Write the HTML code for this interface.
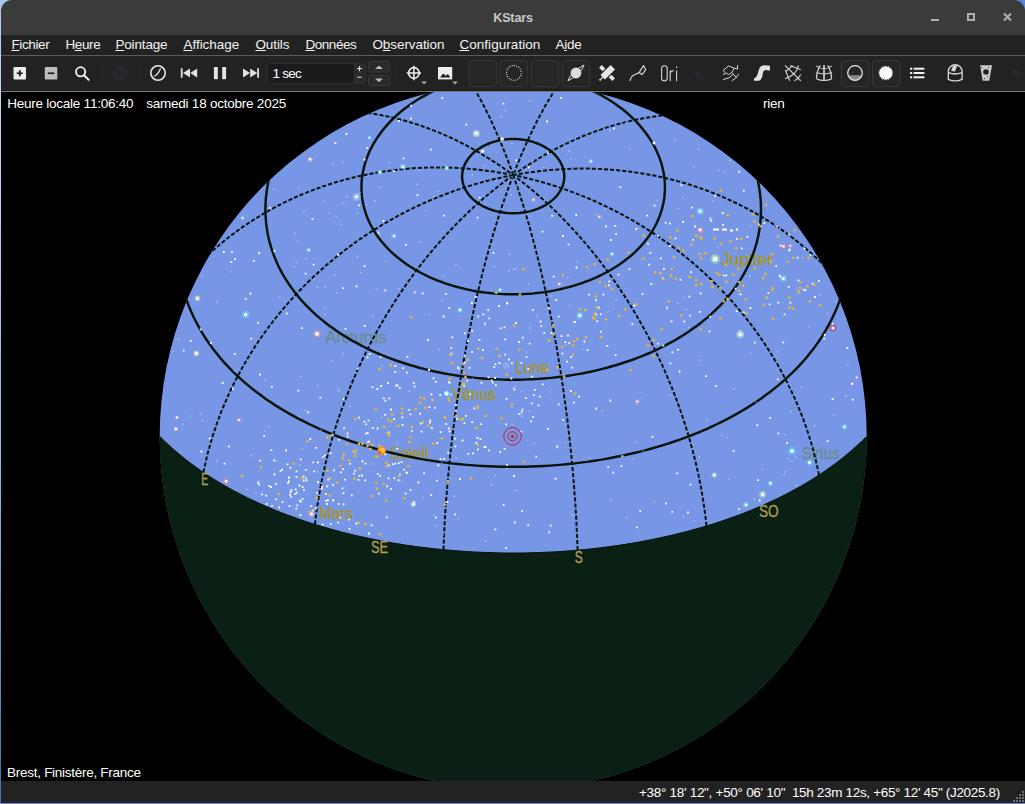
<!DOCTYPE html>
<html><head><meta charset="utf-8"><title>KStars</title><style>
html,body{margin:0;padding:0;}
body{width:1025px;height:804px;overflow:hidden;background:#000;position:relative;font-family:"Liberation Sans",sans-serif;font-size:13px;color:#fff;}
.abs{position:absolute;}
#deskL{left:0;top:0;width:1px;height:804px;background:linear-gradient(#a9c9ee,#bcd8f4 12%,#8fb0e6 60%,#4a6ab4);}
#deskTL{left:0;top:0;width:14px;height:14px;background:#a9c9ee;}
#deskTR{left:1011px;top:0;width:14px;height:14px;background:#5b84d9;}
#title{left:1px;top:0;width:1024px;height:35px;background:#3b3b3b;border-radius:11px 11px 0 0;}
#title .t{left:0;width:1024px;top:10px;text-align:center;font-weight:bold;font-size:12.6px;color:#c8c8c8;line-height:16px;}
#menu{left:1px;top:35px;width:1024px;height:20px;background:#222;}
#menu span{position:absolute;top:1.6px;line-height:16px;font-size:13.5px;color:#f2f2f2;white-space:nowrap;transform-origin:0 50%;}
#menu u{text-decoration:underline;text-underline-offset:1px;}
#sep1{left:1px;top:55px;width:1024px;height:1px;background:#5a5a5a;}
#tool{left:1px;top:56px;width:1024px;height:35px;background:#222;}
#tool .edge{left:0;top:34px;width:1024px;height:1px;background:#1a1a1a;}
#sep2{left:1px;top:91px;width:1024px;height:1px;background:#777;}
#map{left:1px;top:92px;width:1024px;height:689px;background:#000;overflow:hidden;}
#status{left:1px;top:781px;width:1024px;height:22px;background:#222;}
#deskB{left:0;top:803px;width:1025px;height:1px;background:#6a8ad8;}
.info{position:absolute;font-size:13px;color:#fff;white-space:nowrap;line-height:16px;transform-origin:0 50%;}
</style></head><body>
<div class="abs" id="deskTL"></div><div class="abs" id="deskTR"></div>
<div class="abs" id="title"><div class="abs t" style="letter-spacing:-0.18px">KStars</div><svg class="abs" style="left:0;top:0" width="1024" height="35"><rect x="930" y="19" width="8" height="2" fill="#b0b0b0"/><rect x="967" y="14" width="6" height="6" fill="none" stroke="#b0b0b0" stroke-width="2"/><path d="M1003 13.5l7 7M1010 13.5l-7 7" stroke="#b0b0b0" stroke-width="2" fill="none"/></svg></div>
<div class="abs" id="menu"><span id="m0" style="letter-spacing:-0.36px;left:10.4px"><u>F</u>ichier</span><span id="m1" style="letter-spacing:-0.36px;left:64.4px">H<u>e</u>ure</span><span id="m2" style="letter-spacing:-0.16px;left:114.4px"><u>P</u>ointage</span><span id="m3" style="letter-spacing:-0.01px;left:182.4px"><u>A</u>ffichage</span><span id="m4" style="letter-spacing:-0.09px;left:254.4px"><u>O</u>utils</span><span id="m5" style="letter-spacing:-0.44px;left:304.4px"><u>D</u>onnées</span><span id="m6" style="letter-spacing:-0.07px;left:371.4px">O<u>b</u>servation</span><span id="m7" style="letter-spacing:0.05px;left:458.4px"><u>C</u>onfiguration</span><span id="m8" style="letter-spacing:-0.26px;left:554.4px">A<u>i</u>de</span></div>
<div class="abs" id="sep1"></div>
<div class="abs" id="tool"><div class="abs edge"></div><svg class="abs" style="left:0;top:0" width="1024" height="35" viewBox="1 56 1024 35">
<rect x="13.5" y="67" width="12.5" height="12.5" rx="1" fill="#ececec"/>
<path d="M19.75 70.2v6.1M16.7 73.25h6.1" stroke="#111" stroke-width="1.7" fill="none"/>
<rect x="44.8" y="67" width="12.5" height="12.5" rx="1" fill="#bdbdbd"/>
<path d="M47.8 73.25h6.5" stroke="#222" stroke-width="1.8" fill="none"/>
<circle cx="80.6" cy="71.8" r="4.6" fill="none" stroke="#f0f0f0" stroke-width="1.8"/>
<path d="M84 75.2l4.6 4.6" stroke="#f0f0f0" stroke-width="2" stroke-linecap="round"/>
<rect x="101.0" y="65" width="1" height="17" fill="#2a2a2a"/>
<rect x="139.0" y="65" width="1" height="17" fill="#2a2a2a"/>
<rect x="396.0" y="65" width="1" height="17" fill="#2a2a2a"/>
<circle cx="120" cy="73" r="7.8" fill="#25292e"/>
<path d="M116 69q3 1 3 3t3 2q2 1 1 4" stroke="#202327" stroke-width="2" fill="none"/>
<circle cx="158" cy="73" r="7.2" fill="none" stroke="#e8e8e8" stroke-width="1.6"/>
<path d="M154.6 76q3.5-1.5 5.8-7.2" stroke="#e8e8e8" stroke-width="1.3" fill="none" stroke-linecap="round"/>
<path d="M180.8 68.3h1.8v9.4h-1.8zM190 68.6v8.8l-7-4.4zM197.2 68.6v8.8l-7-4.4z" fill="#e0e0e0"/>
<rect x="213.9" y="67" width="3.9" height="12.2" fill="#e4e4e4"/><rect x="222.2" y="67" width="3.9" height="12.2" fill="#e4e4e4"/>
<path d="M257.2 68.3h1.8v9.4h-1.8zM243 68.6v8.8l7-4.4zM250.2 68.6v8.8l7-4.4z" fill="#e0e0e0"/>
<rect x="267.5" y="63.5" width="98.5" height="20" rx="3" fill="#1b1b1b" stroke="#2f2f2f" stroke-width="1"/>
<path d="M353.5 64h9.5a3 3 0 0 1 3 3v13a3 3 0 0 1 -3 3h-9.5z" fill="#2b2b2b"/>
<path d="M357 68.6h5M359.5 66.1v5M357.3 77.2h4.4" stroke="#e0e0e0" stroke-width="1" fill="none"/>
<rect x="368.5" y="61.5" width="21" height="10.5" rx="2.5" fill="#292929" stroke="#3a3a3a"/>
<rect x="368.5" y="75.5" width="21" height="10" rx="2.5" fill="#292929" stroke="#3a3a3a"/>
<path d="M375 69l4-3.6l4 3.6zM375 78.6l4 3.6l4-3.6z" fill="#b8b8b8"/>
<circle cx="413.9" cy="73" r="5.3" fill="none" stroke="#f0f0f0" stroke-width="1.7"/>
<path d="M413.9 65.8v14.4M406.7 73h14.4" stroke="#f0f0f0" stroke-width="1.5"/>
<path d="M421.3 81.6h5.6l-2.8 2.8zM452.3 81.6h5.6l-2.8 2.8z" fill="#aaa"/>
<rect x="438" y="67" width="14.2" height="12.4" fill="#ededed"/>
<path d="M440 77.6l3.2-4.2l2.6 2.4l2-1.8l2.6 3.6z" fill="#222"/>
<rect x="469.2" y="60.5" width="27.6" height="26.2" rx="3.5" fill="#262626" stroke="#383838" stroke-width="1"/>
<rect x="500.1" y="60.5" width="27.6" height="26.2" rx="3.5" fill="#262626" stroke="#383838" stroke-width="1"/>
<rect x="531.1" y="60.5" width="27.6" height="26.2" rx="3.5" fill="#262626" stroke="#383838" stroke-width="1"/>
<rect x="562.2" y="60.5" width="27.6" height="26.2" rx="3.5" fill="#262626" stroke="#383838" stroke-width="1"/>
<rect x="841.4" y="60.5" width="27.6" height="26.2" rx="3.5" fill="#262626" stroke="#383838" stroke-width="1"/>
<rect x="872.4" y="60.5" width="27.6" height="26.2" rx="3.5" fill="#262626" stroke="#383838" stroke-width="1"/>
<circle cx="483" cy="74" r="4" fill="#23272c"/><circle cx="545" cy="73" r="7" fill="none" stroke="#282b2e" stroke-width="1"/>
<circle cx="513.9" cy="72.9" r="7.4" fill="none" stroke="#f0f0f0" stroke-width="1.1" stroke-dasharray="1 1.32"/>
<circle cx="576" cy="73" r="5.4" fill="#dcdcdc"/>
<path d="M568 80.8q2.5-8.5 16-15.8q-2.5 8.5-16 15.8z" fill="none" stroke="#dcdcdc" stroke-width="1"/>
<g transform="translate(607 73) rotate(-45)" fill="#e6e6e6"><rect x="-6" y="-3.1" width="14.2" height="6.2"/><rect x="-1.8" y="-9.4" width="3.7" height="5.2"/><rect x="-1.8" y="4.2" width="3.7" height="5.2"/><rect x="-8.6" y="-0.6" width="3" height="1.2"/><rect x="-10.6" y="-1" width="2" height="2" fill="#bdbdbd"/></g>
<path d="M630 80.8Q631 76.4 633.4 75.2L639.1 72.6M639.1 72.6L643.5 65.6L645.8 69.7L642 74.6Z" fill="none" stroke="#d0d0d0" stroke-width="1.2" stroke-linejoin="round"/>
<rect x="661.6" y="65.8" width="5.6" height="14.9" rx="2.8" fill="none" stroke="#d4d4d4" stroke-width="1.1"/>
<path d="M670.2 70.4v10.8M670.2 73q0.6-2.4 3.4-2.4M676.6 70.6v10.6" stroke="#d4d4d4" stroke-width="1.1" fill="none"/>
<rect x="676" y="66.6" width="1.2" height="1.4" fill="#d4d4d4"/>
<path d="M695 66l2.5 5q5 1 7 6q0.5 3-1 4h-7q-1-3 0-5q-3-2-3-5z" fill="#24282d"/>
<path d="M723 70.5L728.6 65.9L734.2 68.2L731.8 72.6L728.6 74.6L725.4 72.6ZM723 74.3L725.4 73.8M734.2 68.2L737.4 68.8M737.7 65L737.4 69.2M731.8 72.6L736.5 77.6M723 79.6Q729.8 78.6 733 74.6M731.8 80.8Q736.4 78.6 738.8 73.8" fill="none" stroke="#d8d8d8" stroke-width="1" stroke-linejoin="round"/>
<path d="M754 80.8L754 78.6Q757.4 77 758.2 72Q759.4 65.2 764.5 65.2L769.9 65.8L769.9 70.8L766 70Q763.2 70.4 762.8 73.5Q762.2 79.5 759.3 80.8Z" fill="#e2e2e2"/>
<path d="M785 65.3L800.8 80.8M790.3 65.6L800.8 69.7M798.5 65.3Q796.6 75 785 78.7M785.3 70L789.7 80.8M800.8 74.6Q798.6 78.8 794.4 80.8M792.6 65.6L785.6 71.7" fill="none" stroke="#d8d8d8" stroke-width="1.1"/>
<path d="M816.1 65.9Q824 71.6 831.9 65.9M816.4 72.6Q824 75.4 831.9 72.6M816.4 78.7Q824 82.3 831.9 78.7M820.2 65.3Q816.4 72 816.4 78.7M827.8 65.3Q831.6 72 831.6 78.7" fill="none" stroke="#d8d8d8" stroke-width="1.1"/><path d="M824 65v15.6" stroke="#c4c4c4" stroke-width="1.8"/>
<path d="M847.9 75.2h14.2a7.3 7.3 0 0 1 -14.2 0z" fill="#8a8a8a"/>
<circle cx="855" cy="73" r="7.3" fill="none" stroke="#eaeaea" stroke-width="1.2"/>
<path d="M893.4 73.0 L891.7 73.9 L893.1 75.1 L891.3 75.5 L892.2 77.1 L890.3 76.9 L890.8 78.7 L889.0 78.0 L889.0 79.9 L887.5 78.8 L886.9 80.5 L885.8 79.0 L884.7 80.5 L884.1 78.8 L882.6 79.9 L882.6 78.0 L880.8 78.7 L881.3 76.9 L879.4 77.1 L880.3 75.5 L878.5 75.1 L879.9 73.9 L878.2 73.0 L879.9 72.1 L878.5 70.9 L880.3 70.5 L879.4 68.9 L881.3 69.1 L880.8 67.3 L882.6 68.0 L882.6 66.1 L884.1 67.2 L884.7 65.5 L885.8 67.0 L886.9 65.5 L887.5 67.2 L889.0 66.1 L889.0 68.0 L890.8 67.3 L890.3 69.1 L892.2 68.9 L891.3 70.5 L893.1 70.9 L891.7 72.1Z" fill="#f2f2f2"/>
<circle cx="885.8" cy="73" r="6.2" fill="#fafafa"/>
<rect x="910" y="67.7" width="2.2" height="2" fill="#f0f0f0"/><rect x="913.6" y="67.7" width="10.8" height="2" fill="#f0f0f0"/>
<rect x="910" y="72.0" width="2.2" height="2" fill="#f0f0f0"/><rect x="913.6" y="72.0" width="10.8" height="2" fill="#f0f0f0"/>
<rect x="910" y="76.3" width="2.2" height="2" fill="#f0f0f0"/><rect x="913.6" y="76.3" width="10.8" height="2" fill="#f0f0f0"/>
<path d="M948.3 79.3V71.4a6.9 6.7 0 0 1 13.8 0V79.3Q955.2 82.6 948.3 79.3Z" fill="none" stroke="#dadada" stroke-width="1.3"/>
<path d="M948.5 72.6Q955.2 75.4 962 72.6" fill="none" stroke="#dadada" stroke-width="1.3"/>
<path d="M953.2 65.3L957.3 65.6L954.9 71.7L951.1 70.8Z" fill="#d4d4d4"/>
<path d="M980.1 65.2H992.1L989.2 80.8H982.7Z" fill="#cacaca"/><circle cx="986" cy="72" r="2.8" fill="#222"/>
<circle cx="981.6" cy="67.5" r="0.6" fill="#222"/><circle cx="988.6" cy="67.5" r="0.6" fill="#222"/><circle cx="987.5" cy="76.5" r="0.6" fill="#222"/><circle cx="984.5" cy="78.6" r="0.6" fill="#222"/>
<path d="M1013 70l3 3l-3 3M1017 70l3 3l-3 3" stroke="#333" stroke-width="1.2" fill="none"/>
</svg>
<div class="info" id="spin" style="left:271.6px;top:10.4px;font-size:13.5px;letter-spacing:-0.75px;color:#fff">1 sec</div></div>
<div class="abs" id="sep2"></div>
<div class="abs" id="map"><svg class="abs" style="left:0;top:0" width="1024" height="689" viewBox="1 92 1024 689">
<defs><clipPath id="sky"><circle cx="513.2" cy="436.3" r="353.5"/></clipPath>
</defs>
<circle cx="513.2" cy="436.3" r="353.5" fill="#7896e6"/>
<g font-family="Liberation Sans, sans-serif" font-size="16.2"><text x="721.2" y="264.8" textLength="51.7" lengthAdjust="spacingAndGlyphs" fill="#a5961e" stroke="#a5961e" stroke-width="0.3">Jupiter</text><text x="325.2" y="342.5" textLength="61.4" lengthAdjust="spacingAndGlyphs" fill="#698c8c" stroke="#698c8c" stroke-width="0.3">Arcturus</text><text x="515.0" y="372.8" textLength="33.6" lengthAdjust="spacingAndGlyphs" fill="#a5961e" stroke="#a5961e" stroke-width="0.3">Lune</text><text x="452.2" y="399.5" textLength="43.8" lengthAdjust="spacingAndGlyphs" fill="#a5961e" stroke="#a5961e" stroke-width="0.3">Vénus</text><text x="389.7" y="458.8" textLength="38.8" lengthAdjust="spacingAndGlyphs" fill="#a5961e" stroke="#a5961e" stroke-width="0.3">Soleil</text><text x="319.1" y="519.4" textLength="33.9" lengthAdjust="spacingAndGlyphs" fill="#a5961e" stroke="#a5961e" stroke-width="0.3">Mars</text><text x="801.5" y="459.4" textLength="38.1" lengthAdjust="spacingAndGlyphs" fill="#698c8c" stroke="#698c8c" stroke-width="0.3">Sirius</text></g>
<g clip-path="url(#sky)" fill="none" stroke="#04140a">
<g stroke-width="2.45">
<path d="M177.4 229.6 L177.0 236.2 L176.9 242.7 L177.0 249.0 L177.3 255.2 L177.9 261.4 L178.6 267.4 L179.6 273.3 L180.7 279.1 L182.0 284.8 L183.5 290.4 L185.2 295.9 L187.0 301.3 L189.0 306.6 L191.2 311.7 L193.5 316.8 L196.0 321.8 L198.6 326.6 L201.3 331.4 L204.2 336.1 L207.2 340.7 L210.3 345.1 L213.5 349.5 L216.9 353.8 L220.3 358.0 L223.9 362.1 L227.6 366.1 L231.4 370.1 L235.3 373.9 L239.3 377.7 L243.4 381.3 L247.5 384.9 L251.8 388.4 L256.1 391.8 L260.6 395.1 L265.1 398.4 L269.7 401.5 L274.3 404.6 L279.1 407.6 L283.9 410.5 L288.8 413.4 L293.7 416.1 L298.8 418.8 L303.8 421.4 L309.0 424.0 L314.2 426.4 L319.4 428.8 L324.7 431.1 L330.1 433.3 L335.5 435.5 L341.0 437.6 L346.5 439.6 L352.0 441.5 L357.6 443.3 L363.3 445.1 L369.0 446.8 L374.7 448.5 L380.5 450.1 L386.3 451.6 L392.1 453.0 L397.9 454.3 L403.8 455.6 L409.8 456.8 L415.7 458.0 L421.7 459.1 L427.7 460.1 L433.7 461.0 L439.7 461.9 L445.8 462.6 L451.9 463.4 L457.9 464.0 L464.0 464.6 L470.2 465.1 L476.3 465.6 L482.4 466.0 L488.6 466.3 L494.7 466.5 L500.9 466.7 L507.0 466.8 L513.2 466.8 L519.4 466.8 L525.5 466.7 L531.7 466.5 L537.8 466.3 L544.0 466.0 L550.1 465.6 L556.2 465.1 L562.4 464.6 L568.5 464.0 L574.5 463.4 L580.6 462.6 L586.7 461.9 L592.7 461.0 L598.7 460.1 L604.7 459.1 L610.7 458.0 L616.6 456.8 L622.6 455.6 L628.5 454.3 L634.3 453.0 L640.1 451.6 L645.9 450.1 L651.7 448.5 L657.4 446.8 L663.1 445.1 L668.8 443.3 L674.4 441.5 L679.9 439.6 L685.4 437.6 L690.9 435.5 L696.3 433.3 L701.7 431.1 L707.0 428.8 L712.2 426.4 L717.4 424.0 L722.6 421.4 L727.6 418.8 L732.7 416.1 L737.6 413.4 L742.5 410.5 L747.3 407.6 L752.1 404.6 L756.7 401.5 L761.3 398.4 L765.8 395.1 L770.3 391.8 L774.6 388.4 L778.9 384.9 L783.0 381.3 L787.1 377.7 L791.1 373.9 L795.0 370.1 L798.8 366.1 L802.5 362.1 L806.1 358.0 L809.5 353.8 L812.9 349.5 L816.1 345.1 L819.2 340.7 L822.2 336.1 L825.1 331.4 L827.8 326.6 L830.4 321.8 L832.9 316.8 L835.2 311.7 L837.4 306.6 L839.4 301.3 L841.2 295.9 L842.9 290.4 L844.4 284.8 L845.7 279.1 L846.8 273.3 L847.8 267.4 L848.5 261.4 L849.1 255.2 L849.4 249.0 L849.5 242.7 L849.4 236.2 L849.0 229.6"/>
<path d="M322.9 90.0 L317.9 94.8 L313.2 99.7 L308.6 104.6 L304.4 109.6 L300.3 114.6 L296.6 119.7 L293.0 124.7 L289.7 129.9 L286.6 135.0 L283.7 140.1 L281.1 145.2 L278.6 150.3 L276.4 155.4 L274.5 160.5 L272.7 165.6 L271.1 170.7 L269.7 175.7 L268.5 180.7 L267.6 185.6 L266.8 190.5 L266.2 195.4 L265.7 200.2 L265.5 205.0 L265.4 209.8 L265.5 214.5 L265.8 219.1 L266.2 223.7 L266.8 228.2 L267.5 232.7 L268.4 237.1 L269.4 241.4 L270.6 245.7 L271.9 249.9 L273.4 254.1 L275.0 258.2 L276.7 262.2 L278.5 266.2 L280.5 270.1 L282.5 273.9 L284.7 277.7 L287.1 281.4 L289.5 285.0 L292.0 288.6 L294.6 292.1 L297.4 295.5 L300.2 298.9 L303.1 302.1 L306.1 305.4 L309.3 308.5 L312.5 311.6 L315.7 314.6 L319.1 317.6 L322.6 320.4 L326.1 323.2 L329.7 326.0 L333.4 328.6 L337.1 331.2 L340.9 333.8 L344.8 336.2 L348.8 338.6 L352.8 341.0 L356.9 343.2 L361.0 345.4 L365.2 347.5 L369.5 349.6 L373.8 351.6 L378.1 353.5 L382.5 355.3 L387.0 357.1 L391.5 358.8 L396.0 360.5 L400.6 362.0 L405.2 363.5 L409.8 365.0 L414.5 366.3 L419.3 367.7 L424.0 368.9 L428.8 370.1 L433.6 371.2 L438.5 372.2 L443.3 373.2 L448.2 374.1 L453.1 374.9 L458.1 375.7 L463.0 376.4 L468.0 377.0 L473.0 377.6 L478.0 378.1 L483.0 378.5 L488.0 378.9 L493.0 379.2 L498.1 379.4 L503.1 379.6 L508.2 379.7 L513.2 379.7 L518.2 379.7 L523.3 379.6 L528.3 379.4 L533.4 379.2 L538.4 378.9 L543.4 378.5 L548.4 378.1 L553.4 377.6 L558.4 377.0 L563.4 376.4 L568.3 375.7 L573.3 374.9 L578.2 374.1 L583.1 373.2 L587.9 372.2 L592.8 371.2 L597.6 370.1 L602.4 368.9 L607.1 367.7 L611.9 366.3 L616.6 365.0 L621.2 363.5 L625.8 362.0 L630.4 360.5 L634.9 358.8 L639.4 357.1 L643.9 355.3 L648.3 353.5 L652.6 351.6 L656.9 349.6 L661.2 347.5 L665.4 345.4 L669.5 343.2 L673.6 341.0 L677.6 338.6 L681.6 336.2 L685.5 333.8 L689.3 331.2 L693.0 328.6 L696.7 326.0 L700.3 323.2 L703.8 320.4 L707.3 317.6 L710.7 314.6 L713.9 311.6 L717.1 308.5 L720.3 305.4 L723.3 302.1 L726.2 298.9 L729.0 295.5 L731.8 292.1 L734.4 288.6 L736.9 285.0 L739.3 281.4 L741.7 277.7 L743.9 273.9 L745.9 270.1 L747.9 266.2 L749.7 262.2 L751.4 258.2 L753.0 254.1 L754.5 249.9 L755.8 245.7 L757.0 241.4 L758.0 237.1 L758.9 232.7 L759.6 228.2 L760.2 223.7 L760.6 219.1 L760.9 214.5 L761.0 209.8 L760.9 205.0 L760.7 200.2 L760.2 195.4 L759.6 190.5 L758.8 185.6 L757.9 180.7 L756.7 175.7 L755.3 170.7 L753.7 165.6 L751.9 160.5 L750.0 155.4 L747.8 150.3 L745.3 145.2 L742.7 140.1 L739.8 135.0 L736.7 129.9 L733.4 124.7 L729.8 119.7 L726.1 114.6 L722.0 109.6 L717.8 104.6 L713.2 99.7 L708.5 94.8 L703.5 90.0"/>
<path d="M513.2 73.7 L508.4 73.7 L503.7 73.9 L499.0 74.2 L494.2 74.6 L489.5 75.1 L484.9 75.7 L480.2 76.5 L475.6 77.3 L471.1 78.3 L466.6 79.3 L462.1 80.5 L457.7 81.8 L453.4 83.1 L449.1 84.6 L444.9 86.2 L440.8 87.8 L436.8 89.6 L432.8 91.4 L428.9 93.3 L425.2 95.3 L421.5 97.4 L417.9 99.5 L414.4 101.7 L411.0 104.0 L407.7 106.4 L404.5 108.8 L401.4 111.3 L398.4 113.8 L395.6 116.3 L392.8 119.0 L390.2 121.6 L387.7 124.3 L385.3 127.1 L383.0 129.9 L380.8 132.7 L378.8 135.5 L376.8 138.4 L375.0 141.3 L373.3 144.2 L371.7 147.1 L370.2 150.0 L368.9 153.0 L367.7 155.9 L366.5 158.9 L365.5 161.9 L364.6 164.8 L363.9 167.8 L363.2 170.7 L362.6 173.7 L362.2 176.6 L361.8 179.6 L361.6 182.5 L361.5 185.4 L361.5 188.3 L361.5 191.2 L361.7 194.0 L362.0 196.9 L362.4 199.7 L362.9 202.5 L363.5 205.2 L364.1 207.9 L364.9 210.6 L365.8 213.3 L366.7 216.0 L367.7 218.6 L368.9 221.2 L370.1 223.7 L371.4 226.2 L372.7 228.7 L374.2 231.1 L375.7 233.5 L377.3 235.9 L379.0 238.2 L380.8 240.5 L382.6 242.7 L384.5 244.9 L386.5 247.1 L388.5 249.2 L390.6 251.3 L392.8 253.3 L395.0 255.3 L397.3 257.2 L399.7 259.1 L402.1 260.9 L404.5 262.7 L407.0 264.5 L409.6 266.2 L412.2 267.8 L414.9 269.5 L417.6 271.0 L420.3 272.5 L423.1 274.0 L426.0 275.4 L428.9 276.8 L431.8 278.1 L434.7 279.3 L437.7 280.6 L440.8 281.7 L443.8 282.8 L446.9 283.9 L450.1 284.9 L453.2 285.9 L456.4 286.8 L459.6 287.6 L462.9 288.4 L466.1 289.2 L469.4 289.9 L472.7 290.6 L476.0 291.2 L479.3 291.7 L482.7 292.2 L486.0 292.6 L489.4 293.0 L492.8 293.4 L496.2 293.7 L499.6 293.9 L503.0 294.1 L506.4 294.2 L509.8 294.3 L513.2 294.3 L516.6 294.3 L520.0 294.2 L523.4 294.1 L526.8 293.9 L530.2 293.7 L533.6 293.4 L537.0 293.0 L540.4 292.6 L543.7 292.2 L547.1 291.7 L550.4 291.2 L553.7 290.6 L557.0 289.9 L560.3 289.2 L563.5 288.4 L566.8 287.6 L570.0 286.8 L573.2 285.9 L576.3 284.9 L579.5 283.9 L582.6 282.8 L585.6 281.7 L588.7 280.6 L591.7 279.3 L594.6 278.1 L597.5 276.8 L600.4 275.4 L603.3 274.0 L606.1 272.5 L608.8 271.0 L611.5 269.5 L614.2 267.8 L616.8 266.2 L619.4 264.5 L621.9 262.7 L624.3 260.9 L626.7 259.1 L629.1 257.2 L631.4 255.3 L633.6 253.3 L635.8 251.3 L637.9 249.2 L639.9 247.1 L641.9 244.9 L643.8 242.7 L645.6 240.5 L647.4 238.2 L649.1 235.9 L650.7 233.5 L652.2 231.1 L653.7 228.7 L655.0 226.2 L656.3 223.7 L657.5 221.2 L658.7 218.6 L659.7 216.0 L660.6 213.3 L661.5 210.6 L662.3 207.9 L662.9 205.2 L663.5 202.5 L664.0 199.7 L664.4 196.9 L664.7 194.0 L664.9 191.2 L664.9 188.3 L664.9 185.4 L664.8 182.5 L664.6 179.6 L664.2 176.6 L663.8 173.7 L663.2 170.7 L662.5 167.8 L661.8 164.8 L660.9 161.9 L659.9 158.9 L658.7 155.9 L657.5 153.0 L656.2 150.0 L654.7 147.1 L653.1 144.2 L651.4 141.3 L649.6 138.4 L647.6 135.5 L645.6 132.7 L643.4 129.9 L641.1 127.1 L638.7 124.3 L636.2 121.6 L633.6 119.0 L630.8 116.3 L628.0 113.8 L625.0 111.3 L621.9 108.8 L618.7 106.4 L615.4 104.0 L612.0 101.7 L608.5 99.5 L604.9 97.4 L601.2 95.3 L597.5 93.3 L593.6 91.4 L589.6 89.6 L585.6 87.8 L581.5 86.2 L577.3 84.6 L573.0 83.1 L568.7 81.8 L564.3 80.5 L559.8 79.3 L555.3 78.3 L550.8 77.3 L546.2 76.5 L541.5 75.7 L536.9 75.1 L532.2 74.6 L527.4 74.2 L522.7 73.9 L518.0 73.7 L513.2 73.7"/>
<path d="M513.2 138.9 L511.8 139.0 L510.4 139.0 L509.0 139.1 L507.6 139.2 L506.2 139.3 L504.8 139.5 L503.4 139.7 L502.0 139.9 L500.6 140.1 L499.3 140.4 L497.9 140.7 L496.6 141.0 L495.2 141.4 L493.9 141.7 L492.6 142.2 L491.4 142.6 L490.1 143.0 L488.8 143.5 L487.6 144.0 L486.4 144.6 L485.2 145.1 L484.1 145.7 L482.9 146.3 L481.8 146.9 L480.7 147.6 L479.7 148.2 L478.6 148.9 L477.6 149.6 L476.6 150.3 L475.7 151.1 L474.7 151.8 L473.8 152.6 L473.0 153.4 L472.1 154.2 L471.3 155.0 L470.6 155.9 L469.8 156.7 L469.1 157.6 L468.4 158.5 L467.8 159.4 L467.2 160.3 L466.6 161.2 L466.0 162.1 L465.5 163.0 L465.1 164.0 L464.6 164.9 L464.2 165.9 L463.8 166.8 L463.5 167.8 L463.2 168.7 L463.0 169.7 L462.7 170.7 L462.5 171.6 L462.4 172.6 L462.3 173.6 L462.2 174.6 L462.1 175.5 L462.1 176.5 L462.1 177.5 L462.2 178.5 L462.3 179.4 L462.4 180.4 L462.5 181.3 L462.7 182.3 L463.0 183.2 L463.2 184.2 L463.5 185.1 L463.8 186.0 L464.2 187.0 L464.6 187.9 L465.0 188.8 L465.5 189.7 L465.9 190.5 L466.5 191.4 L467.0 192.3 L467.6 193.1 L468.2 193.9 L468.8 194.8 L469.5 195.6 L470.1 196.4 L470.9 197.2 L471.6 197.9 L472.4 198.7 L473.2 199.4 L474.0 200.1 L474.8 200.8 L475.7 201.5 L476.6 202.2 L477.5 202.8 L478.4 203.5 L479.4 204.1 L480.3 204.7 L481.3 205.3 L482.3 205.8 L483.4 206.4 L484.4 206.9 L485.5 207.4 L486.6 207.9 L487.7 208.4 L488.8 208.8 L489.9 209.2 L491.1 209.6 L492.2 210.0 L493.4 210.4 L494.6 210.7 L495.8 211.1 L497.0 211.4 L498.2 211.6 L499.4 211.9 L500.6 212.1 L501.9 212.3 L503.1 212.5 L504.4 212.7 L505.6 212.8 L506.9 213.0 L508.1 213.1 L509.4 213.1 L510.7 213.2 L511.9 213.2 L513.2 213.2 L514.5 213.2 L515.7 213.2 L517.0 213.1 L518.3 213.1 L519.5 213.0 L520.8 212.8 L522.0 212.7 L523.3 212.5 L524.5 212.3 L525.8 212.1 L527.0 211.9 L528.2 211.6 L529.4 211.4 L530.6 211.1 L531.8 210.7 L533.0 210.4 L534.2 210.0 L535.3 209.6 L536.5 209.2 L537.6 208.8 L538.7 208.4 L539.8 207.9 L540.9 207.4 L542.0 206.9 L543.0 206.4 L544.1 205.8 L545.1 205.3 L546.1 204.7 L547.0 204.1 L548.0 203.5 L548.9 202.8 L549.8 202.2 L550.7 201.5 L551.6 200.8 L552.4 200.1 L553.2 199.4 L554.0 198.7 L554.8 197.9 L555.5 197.2 L556.3 196.4 L556.9 195.6 L557.6 194.8 L558.2 193.9 L558.8 193.1 L559.4 192.3 L559.9 191.4 L560.5 190.5 L560.9 189.7 L561.4 188.8 L561.8 187.9 L562.2 187.0 L562.6 186.0 L562.9 185.1 L563.2 184.2 L563.4 183.2 L563.7 182.3 L563.9 181.3 L564.0 180.4 L564.1 179.4 L564.2 178.5 L564.3 177.5 L564.3 176.5 L564.3 175.5 L564.2 174.6 L564.1 173.6 L564.0 172.6 L563.9 171.6 L563.7 170.7 L563.4 169.7 L563.2 168.7 L562.9 167.8 L562.6 166.8 L562.2 165.9 L561.8 164.9 L561.3 164.0 L560.9 163.0 L560.4 162.1 L559.8 161.2 L559.2 160.3 L558.6 159.4 L558.0 158.5 L557.3 157.6 L556.6 156.7 L555.8 155.9 L555.1 155.0 L554.3 154.2 L553.4 153.4 L552.6 152.6 L551.7 151.8 L550.7 151.1 L549.8 150.3 L548.8 149.6 L547.8 148.9 L546.7 148.2 L545.7 147.6 L544.6 146.9 L543.5 146.3 L542.3 145.7 L541.2 145.1 L540.0 144.6 L538.8 144.0 L537.6 143.5 L536.3 143.0 L535.0 142.6 L533.8 142.2 L532.5 141.7 L531.2 141.4 L529.8 141.0 L528.5 140.7 L527.1 140.4 L525.8 140.1 L524.4 139.9 L523.0 139.7 L521.6 139.5 L520.2 139.3 L518.8 139.2 L517.4 139.1 L516.0 139.0 L514.6 139.0 L513.2 138.9"/>
</g><g stroke-width="2" stroke-dasharray="4.1 2">
<path d="M445.7 48.5 L447.7 50.8 L449.7 53.2 L451.7 55.6 L453.7 58.0 L455.6 60.5 L457.5 63.0 L459.4 65.6 L461.2 68.2 L463.0 70.8 L464.8 73.5 L466.6 76.2 L468.4 78.9 L470.1 81.7 L471.8 84.5 L473.5 87.3 L475.2 90.2 L476.9 93.1 L478.5 96.0 L480.2 99.0 L481.8 102.0 L483.4 105.0 L484.9 108.1 L486.5 111.2 L488.0 114.3 L489.6 117.4 L491.1 120.6 L492.6 123.8 L494.0 127.1 L495.5 130.3 L496.9 133.6 L498.4 136.9 L499.8 140.3 L501.2 143.6 L502.6 147.0 L504.0 150.5 L505.3 153.9 L506.7 157.4 L508.0 160.9 L509.3 164.4 L510.6 167.9 L511.9 171.5 L513.2 175.1"/>
<path d="M282.4 115.8 L287.3 114.9 L292.2 114.0 L297.1 113.2 L301.9 112.6 L306.7 112.0 L311.5 111.6 L316.3 111.2 L321.1 111.0 L325.8 110.8 L330.5 110.7 L335.2 110.7 L339.9 110.8 L344.5 110.9 L349.1 111.2 L353.7 111.5 L358.3 111.9 L362.8 112.4 L367.3 113.0 L371.8 113.6 L376.3 114.3 L380.7 115.1 L385.2 116.0 L389.6 116.9 L393.9 117.9 L398.3 119.0 L402.6 120.1 L406.9 121.3 L411.2 122.6 L415.4 123.9 L419.6 125.3 L423.8 126.7 L428.0 128.3 L432.1 129.8 L436.3 131.5 L440.4 133.1 L444.4 134.9 L448.5 136.7 L452.5 138.5 L456.5 140.4 L460.4 142.4 L464.4 144.4 L468.3 146.5 L472.2 148.6 L476.1 150.8 L479.9 153.0 L483.7 155.3 L487.5 157.6 L491.2 160.0 L495.0 162.4 L498.7 164.8 L502.3 167.3 L506.0 169.9 L509.6 172.5 L510.7 173.3"/>
<path d="M122.8 386.8 L124.9 380.8 L127.0 374.9 L129.3 369.0 L131.7 363.3 L134.2 357.6 L136.8 352.0 L139.5 346.5 L142.2 341.0 L145.1 335.7 L148.0 330.4 L151.0 325.3 L154.1 320.2 L157.3 315.2 L160.5 310.2 L163.8 305.4 L167.2 300.7 L170.7 296.0 L174.2 291.4 L177.8 287.0 L181.5 282.6 L185.2 278.2 L189.0 274.0 L192.8 269.9 L196.7 265.8 L200.7 261.9 L204.7 258.0 L208.7 254.2 L212.8 250.5 L217.0 246.9 L221.2 243.3 L225.4 239.9 L229.7 236.5 L234.1 233.2 L238.4 230.0 L242.8 226.9 L247.3 223.9 L251.8 220.9 L256.3 218.1 L260.9 215.3 L265.5 212.6 L270.1 210.0 L274.7 207.4 L279.4 205.0 L284.1 202.6 L288.9 200.3 L293.6 198.1 L298.4 196.0 L303.2 193.9 L308.0 192.0 L312.9 190.1 L317.8 188.3 L322.7 186.5 L327.6 184.9 L332.5 183.3 L337.4 181.8 L342.4 180.4 L347.4 179.0 L352.3 177.8 L357.3 176.6 L362.3 175.5 L367.4 174.4 L372.4 173.5 L377.4 172.6 L382.5 171.7 L387.5 171.0 L392.5 170.3 L397.6 169.7 L402.7 169.2 L407.7 168.7 L412.8 168.3 L417.8 168.0 L422.9 167.8 L428.0 167.6 L433.0 167.5 L438.1 167.5 L443.2 167.5 L448.2 167.6 L453.3 167.8 L458.3 168.0 L463.3 168.3 L468.4 168.7 L473.4 169.2 L478.4 169.7 L483.4 170.3 L488.4 170.9 L493.4 171.6 L498.4 172.4 L503.3 173.2 L508.3 174.1 L509.7 174.4"/>
<path d="M203.4 472.4 L204.5 467.3 L205.6 462.3 L206.8 457.2 L208.0 452.2 L209.4 447.3 L210.8 442.3 L212.3 437.4 L213.8 432.5 L215.5 427.6 L217.1 422.8 L218.9 418.0 L220.7 413.2 L222.6 408.5 L224.6 403.7 L226.6 399.1 L228.7 394.4 L230.8 389.8 L233.1 385.2 L235.3 380.7 L237.7 376.2 L240.1 371.7 L242.5 367.3 L245.0 362.9 L247.6 358.5 L250.3 354.2 L253.0 349.9 L255.7 345.6 L258.5 341.4 L261.4 337.2 L264.3 333.1 L267.2 329.0 L270.3 325.0 L273.3 321.0 L276.5 317.0 L279.6 313.1 L282.9 309.2 L286.1 305.4 L289.5 301.6 L292.8 297.8 L296.3 294.1 L299.7 290.5 L303.2 286.9 L306.8 283.3 L310.4 279.8 L314.0 276.3 L317.7 272.9 L321.5 269.5 L325.2 266.2 L329.1 262.9 L332.9 259.7 L336.8 256.5 L340.8 253.4 L344.7 250.3 L348.7 247.3 L352.8 244.3 L356.9 241.3 L361.0 238.5 L365.2 235.6 L369.4 232.9 L373.6 230.2 L377.9 227.5 L382.2 224.9 L386.5 222.3 L390.9 219.8 L395.3 217.4 L399.7 215.0 L404.1 212.6 L408.6 210.4 L413.1 208.1 L417.7 206.0 L422.2 203.9 L426.8 201.8 L431.4 199.8 L436.1 197.9 L440.7 196.0 L445.4 194.2 L450.2 192.4 L454.9 190.7 L459.6 189.1 L464.4 187.5 L469.2 186.0 L474.0 184.5 L478.9 183.1 L483.7 181.8 L488.6 180.5 L493.5 179.3 L498.4 178.2 L503.3 177.1 L508.3 176.1 L513.2 175.1"/>
<path d="M315.0 524.4 L315.5 519.9 L316.0 515.4 L316.6 510.8 L317.3 506.3 L318.0 501.8 L318.7 497.3 L319.5 492.8 L320.3 488.3 L321.1 483.8 L322.0 479.3 L323.0 474.8 L324.0 470.3 L325.0 465.8 L326.1 461.3 L327.2 456.8 L328.3 452.4 L329.5 447.9 L330.8 443.5 L332.0 439.0 L333.3 434.6 L334.7 430.2 L336.1 425.8 L337.5 421.4 L339.0 417.0 L340.5 412.7 L342.1 408.3 L343.7 403.9 L345.3 399.6 L347.0 395.3 L348.7 391.0 L350.4 386.7 L352.2 382.4 L354.0 378.1 L355.9 373.9 L357.7 369.7 L359.7 365.5 L361.6 361.3 L363.6 357.1 L365.7 352.9 L367.8 348.8 L369.9 344.6 L372.0 340.5 L374.2 336.4 L376.4 332.4 L378.7 328.3 L380.9 324.3 L383.3 320.3 L385.6 316.3 L388.0 312.4 L390.4 308.4 L392.9 304.5 L395.4 300.6 L397.9 296.7 L400.5 292.9 L403.0 289.1 L405.7 285.3 L408.3 281.5 L411.0 277.8 L413.7 274.1 L416.5 270.4 L419.3 266.7 L422.1 263.1 L424.9 259.5 L427.8 255.9 L430.7 252.4 L433.7 248.9 L436.6 245.4 L439.6 242.0 L442.7 238.6 L445.7 235.2 L448.8 231.8 L452.0 228.5 L455.1 225.2 L458.3 222.0 L461.5 218.8 L464.8 215.6 L468.0 212.4 L471.3 209.3 L474.7 206.3 L478.0 203.2 L481.4 200.2 L484.8 197.3 L488.3 194.4 L491.8 191.5 L495.3 188.7 L498.8 185.9 L502.4 183.1 L505.9 180.4 L509.6 177.7 L510.6 176.9"/>
<path d="M443.5 549.7 L443.6 545.4 L443.8 541.1 L444.0 536.8 L444.2 532.5 L444.4 528.2 L444.6 523.9 L444.9 519.6 L445.1 515.3 L445.4 510.9 L445.7 506.6 L446.0 502.3 L446.3 497.9 L446.7 493.6 L447.0 489.2 L447.4 484.9 L447.8 480.5 L448.2 476.2 L448.6 471.8 L449.0 467.5 L449.4 463.1 L449.9 458.7 L450.3 454.4 L450.8 450.0 L451.3 445.6 L451.8 441.3 L452.3 436.9 L452.9 432.5 L453.4 428.2 L454.0 423.8 L454.6 419.5 L455.1 415.1 L455.7 410.8 L456.4 406.4 L457.0 402.1 L457.6 397.7 L458.3 393.4 L459.0 389.1 L459.6 384.7 L460.3 380.4 L461.0 376.1 L461.8 371.8 L462.5 367.5 L463.3 363.2 L464.0 358.9 L464.8 354.6 L465.6 350.3 L466.4 346.1 L467.2 341.8 L468.0 337.6 L468.9 333.3 L469.7 329.1 L470.6 324.9 L471.5 320.7 L472.4 316.5 L473.3 312.3 L474.2 308.1 L475.1 303.9 L476.1 299.8 L477.0 295.6 L478.0 291.5 L479.0 287.4 L480.0 283.3 L481.0 279.2 L482.0 275.1 L483.0 271.0 L484.1 267.0 L485.1 263.0 L486.2 258.9 L487.3 254.9 L488.4 250.9 L489.5 247.0 L490.7 243.0 L491.8 239.1 L492.9 235.2 L494.1 231.3 L495.3 227.4 L496.5 223.5 L497.7 219.7 L498.9 215.8 L500.1 212.0 L501.4 208.2 L502.6 204.5 L503.9 200.7 L505.2 197.0 L506.5 193.3 L507.8 189.6 L509.1 186.0 L510.5 182.3 L511.8 178.7 L512.2 177.6"/>
<path d="M577.6 550.2 L577.5 545.9 L577.3 541.6 L577.1 537.3 L576.9 533.0 L576.7 528.7 L576.5 524.4 L576.3 520.1 L576.1 515.8 L575.8 511.5 L575.5 507.1 L575.3 502.8 L575.0 498.5 L574.6 494.1 L574.3 489.8 L574.0 485.4 L573.6 481.1 L573.3 476.7 L572.9 472.4 L572.5 468.0 L572.1 463.6 L571.7 459.3 L571.3 454.9 L570.8 450.6 L570.4 446.2 L569.9 441.8 L569.4 437.5 L568.9 433.1 L568.4 428.7 L567.9 424.4 L567.4 420.0 L566.8 415.7 L566.3 411.3 L565.7 407.0 L565.1 402.6 L564.5 398.3 L563.9 393.9 L563.3 389.6 L562.7 385.3 L562.0 381.0 L561.4 376.6 L560.7 372.3 L560.0 368.0 L559.3 363.7 L558.6 359.4 L557.9 355.1 L557.2 350.9 L556.5 346.6 L555.7 342.3 L554.9 338.1 L554.2 333.8 L553.4 329.6 L552.6 325.4 L551.8 321.1 L550.9 316.9 L550.1 312.7 L549.3 308.5 L548.4 304.4 L547.5 300.2 L546.6 296.1 L545.7 291.9 L544.8 287.8 L543.9 283.7 L543.0 279.6 L542.0 275.5 L541.1 271.4 L540.1 267.3 L539.1 263.3 L538.1 259.3 L537.1 255.3 L536.1 251.3 L535.1 247.3 L534.0 243.3 L533.0 239.4 L531.9 235.4 L530.8 231.5 L529.8 227.6 L528.7 223.7 L527.5 219.9 L526.4 216.0 L525.3 212.2 L524.1 208.4 L523.0 204.6 L521.8 200.9 L520.6 197.1 L519.4 193.4 L518.2 189.7 L517.0 186.0 L515.7 182.4 L514.5 178.7 L513.2 175.1"/>
<path d="M706.5 525.9 L706.0 521.4 L705.5 516.9 L704.9 512.4 L704.3 507.9 L703.6 503.4 L702.9 498.9 L702.2 494.4 L701.4 489.9 L700.6 485.4 L699.7 480.9 L698.8 476.4 L697.8 471.9 L696.8 467.4 L695.8 463.0 L694.7 458.5 L693.6 454.1 L692.4 449.6 L691.2 445.2 L690.0 440.7 L688.7 436.3 L687.4 431.9 L686.0 427.5 L684.6 423.1 L683.2 418.7 L681.7 414.4 L680.2 410.0 L678.7 405.6 L677.1 401.3 L675.5 397.0 L673.8 392.7 L672.1 388.4 L670.4 384.1 L668.6 379.8 L666.8 375.6 L665.0 371.3 L663.1 367.1 L661.2 362.9 L659.2 358.7 L657.2 354.5 L655.2 350.4 L653.2 346.2 L651.1 342.1 L649.0 338.0 L646.8 333.9 L644.6 329.9 L642.4 325.8 L640.1 321.8 L637.8 317.8 L635.5 313.8 L633.1 309.9 L630.7 305.9 L628.3 302.0 L625.9 298.1 L623.4 294.3 L620.8 290.4 L618.3 286.6 L615.7 282.8 L613.1 279.1 L610.4 275.3 L607.7 271.6 L605.0 267.9 L602.3 264.3 L599.5 260.7 L596.7 257.1 L593.8 253.5 L591.0 249.9 L588.1 246.4 L585.1 242.9 L582.2 239.5 L579.2 236.1 L576.1 232.7 L573.1 229.3 L570.0 226.0 L566.9 222.7 L563.8 219.5 L560.6 216.3 L557.4 213.1 L554.2 209.9 L550.9 206.8 L547.6 203.7 L544.3 200.7 L541.0 197.7 L537.6 194.7 L534.2 191.8 L530.8 188.9 L527.3 186.1 L523.8 183.3 L520.3 180.5 L516.8 177.8 L515.7 177.0"/>
<path d="M819.0 475.1 L818.0 470.0 L816.9 465.0 L815.7 460.0 L814.5 455.0 L813.2 450.0 L811.8 445.1 L810.4 440.2 L808.8 435.3 L807.3 430.5 L805.6 425.7 L803.9 420.9 L802.1 416.1 L800.2 411.4 L798.3 406.7 L796.3 402.0 L794.3 397.4 L792.2 392.8 L790.0 388.2 L787.8 383.6 L785.5 379.1 L783.1 374.7 L780.7 370.2 L778.3 365.8 L775.7 361.4 L773.1 357.1 L770.5 352.8 L767.8 348.6 L765.0 344.3 L762.2 340.2 L759.4 336.0 L756.5 331.9 L753.5 327.9 L750.5 323.8 L747.4 319.9 L744.3 315.9 L741.1 312.0 L737.9 308.2 L734.6 304.3 L731.3 300.6 L727.9 296.8 L724.5 293.2 L721.0 289.5 L717.5 285.9 L714.0 282.4 L710.4 278.9 L706.8 275.4 L703.1 272.0 L699.4 268.6 L695.6 265.3 L691.8 262.1 L687.9 258.8 L684.0 255.7 L680.1 252.5 L676.2 249.5 L672.2 246.4 L668.1 243.5 L664.0 240.6 L659.9 237.7 L655.8 234.9 L651.6 232.1 L647.4 229.4 L643.1 226.7 L638.8 224.1 L634.5 221.5 L630.2 219.0 L625.8 216.6 L621.4 214.2 L617.0 211.9 L612.5 209.6 L608.0 207.4 L603.5 205.2 L598.9 203.1 L594.4 201.0 L589.8 199.0 L585.1 197.1 L580.5 195.2 L575.8 193.4 L571.1 191.6 L566.4 189.9 L561.7 188.2 L556.9 186.6 L552.1 185.1 L547.3 183.6 L542.5 182.2 L537.6 180.9 L532.8 179.6 L527.9 178.4 L523.0 177.2 L518.1 176.1 L516.6 175.8"/>
<path d="M901.3 391.1 L899.2 385.1 L897.1 379.2 L894.9 373.4 L892.5 367.7 L890.1 362.0 L887.6 356.5 L885.0 351.0 L882.3 345.6 L879.5 340.2 L876.7 335.0 L873.7 329.8 L870.7 324.7 L867.6 319.7 L864.4 314.8 L861.1 310.0 L857.8 305.2 L854.4 300.6 L850.9 296.0 L847.4 291.5 L843.8 287.1 L840.1 282.7 L836.4 278.5 L832.6 274.3 L828.8 270.3 L824.9 266.3 L820.9 262.4 L816.9 258.5 L812.9 254.8 L808.8 251.1 L804.6 247.5 L800.4 244.1 L796.2 240.6 L791.9 237.3 L787.6 234.1 L783.2 230.9 L778.8 227.8 L774.4 224.8 L769.9 221.9 L765.4 219.1 L760.8 216.3 L756.2 213.6 L751.6 211.1 L746.9 208.5 L742.3 206.1 L737.6 203.8 L732.8 201.5 L728.1 199.3 L723.3 197.2 L718.5 195.1 L713.7 193.2 L708.8 191.3 L703.9 189.5 L699.0 187.8 L694.1 186.1 L689.2 184.5 L684.3 183.0 L679.3 181.6 L674.3 180.3 L669.4 179.0 L664.4 177.8 L659.4 176.7 L654.3 175.6 L649.3 174.7 L644.3 173.8 L639.2 173.0 L634.2 172.2 L629.1 171.5 L624.1 170.9 L619.0 170.4 L614.0 169.9 L608.9 169.5 L603.8 169.2 L598.7 168.9 L593.7 168.8 L588.6 168.6 L583.5 168.6 L578.5 168.6 L573.4 168.7 L568.3 168.9 L563.3 169.1 L558.2 169.4 L553.2 169.8 L548.2 170.2 L543.1 170.7 L538.1 171.3 L533.1 171.9 L528.1 172.6 L523.1 173.4 L518.2 174.2 L513.2 175.1"/>
<path d="M747.2 120.3 L742.3 119.2 L737.4 118.2 L732.5 117.4 L727.6 116.6 L722.7 116.0 L717.9 115.4 L713.1 114.9 L708.3 114.6 L703.5 114.3 L698.8 114.1 L694.1 114.0 L689.4 114.0 L684.7 114.1 L680.0 114.2 L675.4 114.5 L670.8 114.8 L666.2 115.2 L661.6 115.6 L657.0 116.2 L652.5 116.8 L648.0 117.5 L643.5 118.3 L639.1 119.1 L634.6 120.0 L630.2 121.0 L625.8 122.1 L621.5 123.2 L617.1 124.4 L612.8 125.6 L608.5 126.9 L604.3 128.3 L600.0 129.7 L595.8 131.2 L591.6 132.8 L587.5 134.4 L583.3 136.0 L579.2 137.8 L575.1 139.6 L571.0 141.4 L567.0 143.3 L563.0 145.2 L559.0 147.2 L555.0 149.3 L551.1 151.4 L547.2 153.5 L543.3 155.7 L539.5 158.0 L535.6 160.3 L531.8 162.7 L528.0 165.1 L524.3 167.5 L520.6 170.0 L516.9 172.5 L515.8 173.3"/>
<path d="M586.0 50.0 L583.8 52.2 L581.7 54.6 L579.6 56.9 L577.5 59.3 L575.4 61.7 L573.4 64.2 L571.3 66.7 L569.3 69.2 L567.4 71.8 L565.4 74.4 L563.5 77.1 L561.6 79.8 L559.7 82.5 L557.9 85.3 L556.0 88.1 L554.2 90.9 L552.4 93.8 L550.7 96.7 L548.9 99.6 L547.2 102.6 L545.4 105.6 L543.7 108.6 L542.1 111.7 L540.4 114.7 L538.7 117.9 L537.1 121.0 L535.5 124.2 L533.9 127.4 L532.3 130.6 L530.8 133.9 L529.2 137.2 L527.7 140.5 L526.2 143.8 L524.7 147.2 L523.2 150.6 L521.7 154.0 L520.3 157.5 L518.8 161.0 L517.4 164.5 L516.0 168.0 L514.6 171.5 L514.2 172.6"/>
</g></g>
<path d="M388.7 162.6h0M317.5 385.6h0M567.7 277.6h0M305.3 410.4h0M381.8 366.0h0M371.6 463.8h0M332.3 360.8h0M505.4 110.3h0M700.2 360.2h0M381.5 417.4h0M569.7 305.5h0M827.6 313.9h0M202.6 420.3h0M360.9 272.6h0M334.8 275.0h0M216.7 302.2h0M784.2 475.4h0M323.7 201.2h0M455.9 264.8h0M833.5 415.2h0M795.7 457.0h0M246.6 489.3h0M533.2 160.6h0M178.8 339.2h0M419.0 170.2h0M317.4 471.8h0M762.5 469.2h0M682.8 198.1h0M357.3 213.3h0M835.9 301.3h0M298.8 187.6h0M796.2 485.3h0M626.7 517.8h0M717.6 247.6h0M443.5 535.1h0M729.9 160.4h0M846.1 396.0h0M819.8 295.0h0M366.8 204.6h0M803.1 257.6h0M572.1 515.2h0M808.5 326.8h0M529.8 100.8h0M724.7 172.7h0M526.2 351.9h0M355.5 453.4h0M556.8 447.7h0M473.1 378.7h0M521.8 416.2h0M536.7 315.7h0M654.0 502.2h0M343.2 353.9h0M633.0 458.9h0M268.9 427.1h0M298.1 241.1h0M173.5 351.3h0M458.2 518.5h0M342.5 161.9h0M200.4 414.1h0M380.3 234.7h0M738.7 294.3h0M749.8 276.0h0M402.0 481.5h0M754.5 499.4h0M484.5 165.7h0M429.5 314.1h0M374.8 201.0h0M533.8 443.3h0M265.4 430.9h0M790.3 385.6h0M530.0 328.0h0M728.6 478.8h0M790.9 411.6h0M750.6 353.4h0M602.4 410.6h0M688.7 327.4h0M625.8 122.9h0M508.9 271.0h0M643.1 450.9h0M349.7 406.5h0M637.4 228.1h0M570.8 158.3h0M739.6 330.1h0M657.0 200.3h0M814.6 425.7h0M749.8 225.7h0M336.0 216.4h0M293.9 266.7h0M784.9 472.0h0M677.5 303.0h0M274.0 189.3h0M511.1 195.0h0M328.8 212.9h0M515.6 386.7h0M442.3 300.7h0M182.5 424.1h0M436.5 525.8h0M529.0 411.2h0M670.0 395.0h0M712.8 200.8h0M337.7 389.8h0M434.1 196.6h0M485.4 540.8h0M512.0 407.6h0M341.6 404.3h0M398.7 288.8h0M299.8 465.0h0M516.6 188.0h0M317.6 287.2h0M437.9 191.7h0M202.2 276.1h0M784.4 434.9h0M357.5 256.5h0M306.3 258.9h0M494.4 266.4h0M296.2 262.5h0M595.9 214.7h0M693.9 520.9h0M325.1 314.4h0M337.2 293.2h0M727.1 437.6h0M385.6 261.3h0M512.1 424.2h0M325.3 287.1h0M636.3 442.1h0M629.4 148.7h0M333.2 163.8h0M323.3 470.4h0M495.4 475.3h0M847.6 364.9h0M422.9 497.3h0M343.5 456.0h0M234.5 371.0h0M303.9 211.3h0M380.4 187.2h0M439.2 349.5h0M454.1 496.5h0M416.9 184.3h0M797.1 290.3h0M446.9 505.2h0M549.6 391.8h0M506.5 468.7h0M501.0 117.0h0M433.9 515.2h0M313.9 279.1h0M583.6 349.4h0M376.2 288.6h0M699.5 457.0h0M609.7 130.5h0M516.0 268.8h0M256.0 493.1h0M276.4 461.0h0M694.3 166.3h0M776.9 351.8h0M472.4 174.7h0M339.0 391.2h0M265.3 380.3h0M610.9 499.8h0M616.1 299.7h0M678.3 208.3h0M300.8 376.6h0M788.5 458.4h0M686.5 309.7h0M396.9 442.8h0M551.2 296.1h0M529.6 216.2h0M343.8 202.5h0M801.3 387.2h0M491.6 485.0h0M766.0 296.6h0M599.9 128.4h0M189.2 416.1h0M577.2 262.1h0M733.8 388.8h0M341.2 224.3h0M419.9 242.1h0M515.8 490.4h0M302.5 448.7h0M509.4 254.5h0M360.3 192.5h0M512.0 143.4h0M216.9 460.7h0M443.4 276.7h0M514.0 269.5h0M324.8 307.7h0M693.1 444.4h0M755.8 401.9h0M279.6 297.4h0M569.2 151.0h0M295.2 233.1h0M674.9 139.6h0M231.6 271.8h0M721.7 435.2h0M441.8 462.2h0M513.5 388.0h0M683.5 516.9h0M565.5 442.6h0M321.3 430.0h0M706.9 419.6h0M640.2 392.2h0M456.3 458.2h0M604.8 209.0h0M543.9 167.3h0M565.9 345.2h0M521.8 391.2h0M528.5 284.0h0M698.9 149.3h0M347.2 197.0h0M251.1 455.5h0M608.1 311.6h0M409.4 391.0h0M547.3 150.6h0M425.6 210.7h0M373.1 316.4h0M259.0 481.1h0M719.4 170.6h0M589.8 457.6h0M791.7 460.8h0M299.3 416.2h0M684.2 297.3h0" stroke="#ffffff" stroke-opacity="0.55" stroke-width="1.3" stroke-linecap="square" fill="none"/>
<path d="M210.9 342.8h0M200.7 329.5h0M466.3 124.7h0M459.8 479.0h0M364.5 159.5h0M377.8 473.9h0M570.9 391.0h0M547.0 121.4h0M778.4 433.4h0M455.3 446.3h0M201.4 451.5h0M356.6 286.4h0M576.2 215.0h0M596.3 408.5h0M723.8 275.6h0M232.9 388.8h0M274.5 251.1h0M231.4 262.2h0M777.8 379.4h0M338.1 254.6h0M489.2 318.4h0M232.0 252.4h0M770.1 417.8h0M536.2 456.6h0M411.1 105.6h0M417.5 195.2h0M621.4 466.2h0M690.0 315.7h0M852.8 399.6h0M547.6 153.3h0M743.8 190.8h0M343.1 288.1h0M672.4 352.4h0M234.7 354.2h0M245.7 298.9h0M464.8 333.3h0M600.8 331.7h0M710.4 218.6h0M563.1 419.8h0M608.2 467.2h0M769.7 304.4h0M550.7 525.7h0M251.1 338.6h0M364.7 326.0h0M678.0 349.9h0M495.4 529.4h0M609.3 281.4h0M209.7 438.7h0M359.0 205.4h0M847.3 348.0h0M301.8 328.2h0M346.5 134.0h0M665.9 503.4h0M253.8 260.8h0M347.5 433.3h0M614.1 128.3h0M339.2 439.8h0M561.1 97.8h0M488.2 310.2h0M477.5 217.7h0M503.4 103.6h0M507.3 303.0h0M259.2 253.0h0M690.5 484.7h0M364.6 266.2h0M414.7 292.3h0M548.0 428.8h0M615.3 225.9h0M493.5 252.8h0M343.6 399.0h0M553.7 276.6h0M223.8 252.0h0M787.0 442.8h0M452.3 337.3h0M398.8 121.0h0M312.4 218.8h0M759.7 500.5h0M494.3 366.8h0M335.4 143.0h0M483.0 350.1h0M616.1 234.2h0M784.5 314.4h0M657.9 235.9h0M380.1 475.8h0M316.3 447.9h0M832.7 324.0h0M629.4 269.2h0M394.2 171.2h0M740.8 294.4h0M733.6 450.8h0M688.0 512.5h0M383.5 221.0h0M706.1 376.2h0M692.0 207.7h0M183.7 350.6h0M367.4 357.3h0M681.5 185.2h0M568.5 244.7h0M367.3 147.8h0M313.6 264.6h0M620.4 187.2h0M391.1 409.5h0M547.2 121.6h0M651.3 283.8h0M380.5 357.1h0M222.7 383.2h0M516.4 160.3h0M528.2 525.1h0M715.3 195.9h0M758.1 480.1h0M430.9 149.6h0M672.2 511.9h0M557.3 446.5h0M475.6 297.1h0M597.3 321.1h0M286.7 313.5h0M250.5 293.5h0M472.2 330.8h0M709.5 331.4h0M677.3 473.4h0M354.1 473.7h0M514.8 522.5h0M345.6 328.8h0M640.2 511.1h0M534.9 389.8h0M438.4 465.3h0M573.9 402.6h0M522.2 511.1h0M320.4 397.7h0M234.9 259.1h0M572.3 367.7h0M600.8 314.3h0M443.9 215.7h0M615.7 355.2h0M190.8 340.8h0M549.2 532.4h0M613.3 472.7h0M378.4 232.5h0M479.6 197.7h0M757.3 425.1h0M827.6 441.2h0M782.0 245.8h0M562.9 236.0h0M403.5 158.4h0M652.5 436.8h0M739.1 509.1h0M606.2 226.5h0M228.9 446.4h0M385.3 290.3h0M468.3 453.8h0M657.9 343.7h0M739.3 171.7h0M507.2 464.9h0M716.1 385.9h0M406.1 244.9h0M270.0 207.9h0M528.9 167.3h0M298.4 390.6h0M305.7 273.7h0M260.0 374.5h0M381.0 386.0h0M481.5 382.9h0M637.1 527.3h0M622.4 456.2h0M506.0 548.1h0M824.7 335.0h0M308.2 412.3h0M411.0 118.5h0M442.3 98.2h0M457.0 418.8h0M824.2 338.7h0M726.3 275.4h0M736.7 311.1h0M410.5 490.1h0M670.0 223.6h0M610.3 400.5h0M832.6 399.0h0M324.9 455.3h0M552.1 215.8h0M258.2 322.8h0M464.4 423.1h0M695.1 226.5h0M274.5 474.5h0M519.5 414.0h0M410.4 414.4h0M449.2 308.1h0M406.8 372.6h0M437.1 480.7h0M499.5 355.6h0M691.1 272.1h0M810.5 254.9h0M711.2 220.9h0M306.6 480.6h0M358.5 479.9h0M777.1 226.5h0M338.6 503.8h0M338.1 522.6h0M467.3 380.6h0M576.5 267.5h0M429.8 422.5h0M402.4 417.4h0M351.8 495.3h0M368.5 420.6h0M342.4 488.3h0M750.4 308.0h0M607.3 345.9h0M334.1 470.3h0M451.4 353.7h0M584.4 341.5h0M505.3 339.3h0M290.4 467.6h0M764.2 223.2h0M529.7 343.7h0M271.4 450.2h0M332.9 434.7h0M789.1 250.5h0M780.3 276.8h0M395.4 366.0h0M437.3 443.0h0M436.0 381.9h0M540.6 321.5h0M488.5 377.3h0M406.4 472.4h0M365.3 480.4h0M399.8 387.9h0M430.3 420.3h0M340.5 517.7h0M429.0 370.0h0M693.2 239.9h0M503.7 504.8h0M812.5 283.6h0M758.8 224.4h0M472.3 422.1h0M455.2 514.3h0M548.8 307.8h0M436.1 517.5h0M675.4 238.3h0M595.9 300.1h0M532.0 376.7h0M448.9 382.2h0M431.8 428.0h0M333.4 500.2h0M326.0 493.8h0M303.6 476.3h0M476.3 442.9h0M341.0 472.4h0M574.4 321.9h0M561.4 336.2h0M485.7 446.8h0M386.8 517.3h0M401.6 462.1h0M648.1 243.7h0M562.5 353.6h0M505.2 354.7h0M433.6 378.4h0M567.1 361.7h0M269.2 485.9h0M521.8 411.9h0M429.4 407.2h0M434.9 407.8h0M377.6 428.5h0M634.3 305.7h0M737.1 238.9h0M389.3 398.4h0M359.4 475.8h0M274.1 460.4h0M446.0 293.8h0M632.4 324.1h0M531.2 421.4h0M504.6 448.8h0M776.2 266.1h0M589.2 294.7h0M539.8 396.7h0M389.0 432.4h0M551.5 332.8h0M449.8 382.8h0M371.6 525.4h0M315.8 508.5h0M369.0 441.7h0M355.1 470.6h0M414.5 386.5h0M506.6 398.8h0M683.2 222.0h0M499.0 306.0h0M399.9 474.6h0M495.4 364.2h0M413.7 383.2h0M391.0 488.9h0M447.4 501.8h0M470.1 394.4h0M473.1 453.3h0M378.8 493.7h0M742.0 248.3h0M818.8 281.0h0M636.0 229.1h0M669.8 246.2h0M358.9 417.7h0M464.8 355.4h0M608.9 285.4h0M481.1 424.1h0M499.5 363.0h0M357.7 368.9h0M506.1 424.3h0M485.0 323.6h0M286.1 450.5h0M349.6 528.8h0M679.6 371.5h0M407.4 356.8h0M385.4 400.7h0M670.4 363.4h0M754.7 342.6h0M446.2 424.0h0M526.5 357.1h0M663.1 278.5h0M330.5 453.0h0M663.4 345.7h0M445.1 417.6h0M387.1 486.3h0M680.5 279.8h0M383.6 398.4h0M327.8 500.2h0M660.9 258.4h0M571.1 357.2h0M282.5 501.9h0M532.8 309.9h0M500.3 452.0h0M364.4 421.6h0M565.3 342.2h0M388.6 478.4h0M350.1 463.8h0M398.8 463.1h0M447.5 392.8h0M343.0 469.2h0M448.1 452.7h0M362.1 475.5h0M650.4 252.8h0M440.6 432.2h0M347.6 436.4h0M516.1 323.0h0M389.0 465.4h0M544.2 333.1h0M504.4 327.4h0M407.0 473.2h0M471.9 303.0h0M798.4 280.4h0M723.1 224.9h0M558.7 316.7h0M500.8 328.4h0M392.8 464.2h0M385.3 454.3h0M514.5 389.7h0M428.1 340.0h0M568.0 335.5h0M349.0 519.7h0M538.5 405.3h0M587.6 350.1h0M788.8 234.3h0M318.0 482.0h0M431.3 394.3h0M780.5 245.5h0M710.3 316.7h0M372.8 427.8h0M395.4 463.7h0M458.6 368.7h0M556.3 299.8h0M642.5 293.9h0M647.2 215.7h0M362.5 461.4h0M522.8 337.7h0M449.6 431.4h0M343.4 493.1h0M271.9 386.9h0M402.6 424.8h0M654.5 205.7h0M450.7 394.5h0M369.7 354.0h0M788.7 286.8h0M789.7 249.6h0M528.2 369.2h0M689.4 296.6h0M414.2 501.9h0M422.8 293.3h0M495.9 385.1h0M533.8 395.2h0M575.2 322.2h0M491.7 380.5h0M276.2 499.4h0M396.2 385.5h0M480.4 439.1h0M541.3 326.2h0M667.0 307.7h0M531.8 403.3h0M483.3 314.3h0M365.6 463.7h0M735.7 288.7h0M747.4 236.8h0M533.2 417.2h0M778.2 302.7h0M444.1 458.8h0M409.1 409.8h0M479.5 339.9h0M511.9 363.1h0M344.1 428.4h0M743.9 312.3h0M477.9 449.3h0M684.3 321.5h0M411.8 430.9h0M458.1 367.4h0M451.3 348.2h0M260.2 460.7h0M462.6 440.5h0M488.8 450.3h0M369.1 533.5h0M467.9 341.0h0M455.2 438.7h0M449.1 428.5h0M420.1 413.6h0M522.4 409.6h0M418.4 482.5h0M555.5 478.6h0M665.6 222.7h0M805.6 290.2h0M345.0 479.7h0M323.0 457.2h0M368.0 442.2h0M603.4 294.5h0M404.0 469.7h0M377.4 389.0h0M421.5 431.7h0M671.5 321.4h0M663.9 269.0h0M815.1 297.0h0M464.1 385.8h0M431.2 495.1h0M443.6 316.5h0M385.2 414.9h0M477.4 437.8h0M388.2 383.0h0M579.1 396.6h0M327.2 486.4h0M478.2 316.3h0M310.3 439.0h0M456.1 410.6h0M511.4 378.5h0M291.4 489.9h0M300.5 515.0h0M596.2 314.7h0M405.6 493.6h0M394.1 419.0h0M372.5 387.2h0M469.5 367.9h0M803.7 289.7h0M455.8 405.2h0M509.0 359.5h0M322.6 524.7h0M306.1 478.3h0M296.6 471.4h0M424.1 473.2h0M700.6 293.3h0M649.2 264.6h0M464.9 362.6h0M366.3 424.4h0M569.3 343.2h0M542.5 231.7h0M420.8 423.5h0M380.2 446.3h0M365.9 433.7h0M783.3 342.3h0M397.2 448.8h0M440.6 458.8h0M495.0 378.0h0M398.5 480.4h0M367.8 432.9h0M296.9 492.6h0M542.7 384.4h0M492.9 382.7h0M484.4 447.0h0M610.9 240.0h0M797.6 257.6h0M514.0 476.0h0M521.3 362.8h0M300.8 459.4h0M598.9 307.7h0M558.7 404.4h0M280.4 470.8h0M305.8 469.8h0M526.0 398.1h0M618.5 274.7h0M472.1 352.0h0M440.2 395.0h0M507.0 303.5h0M790.4 302.6h0M779.7 275.4h0M474.3 408.4h0M722.7 213.0h0M768.4 293.2h0M333.0 484.8h0M465.8 415.9h0M356.2 523.5h0M394.4 478.2h0M804.6 248.8h0M699.8 311.9h0M397.5 385.5h0M264.1 435.9h0M519.0 342.0h0M521.3 431.6h0M312.8 510.7h0M288.8 477.8h0M403.1 368.1h0M395.2 372.2h0M314.2 471.4h0M296.5 476.8h0M333.1 500.5h0M259.2 484.3h0M299.5 485.5h0M299.8 500.7h0M302.6 486.8h0M290.6 491.7h0M282.1 469.7h0M290.0 494.6h0M289.0 477.5h0M224.6 463.7h0M317.8 462.5h0M311.2 506.1h0M295.4 493.8h0M317.2 493.0h0M296.4 508.7h0M271.0 487.0h0M291.2 496.6h0M313.2 462.3h0M297.3 505.4h0M326.2 500.8h0M279.2 507.5h0M266.3 495.6h0M290.7 492.1h0M272.0 505.9h0M289.4 506.2h0M303.7 480.5h0M287.4 464.3h0M275.9 483.8h0M321.9 486.7h0M304.0 489.9h0M266.7 503.8h0M343.6 504.3h0M327.1 504.0h0M258.0 482.6h0M262.1 494.3h0M288.9 481.3h0M330.7 524.1h0M301.0 501.6h0M321.7 488.7h0M288.0 483.0h0M328.3 479.6h0M302.6 498.8h0M295.7 489.3h0" stroke="#ffffff" stroke-width="1.8" stroke-linecap="square" fill="none"/>
<path d="M448.5 397.9h0M481.9 358.1h0M465.5 377.2h0M372.1 496.2h0M725.7 264.9h0M793.6 257.8h0M653.8 340.0h0M524.1 461.6h0M594.8 264.4h0M365.4 524.2h0M655.3 272.5h0M387.6 433.3h0M447.9 481.5h0M241.9 476.0h0M355.8 450.4h0M462.7 385.0h0M663.5 279.3h0M739.3 290.7h0M760.5 226.2h0M349.0 460.7h0M720.0 288.1h0M450.4 355.1h0M485.8 416.0h0M564.2 376.4h0M577.2 339.2h0M763.2 278.2h0M316.8 498.2h0M441.9 438.5h0M444.9 417.5h0M606.1 319.5h0M593.1 317.6h0M595.7 296.5h0M388.3 420.0h0M415.7 409.2h0M723.6 301.3h0M699.5 254.0h0M302.1 478.0h0M377.1 456.9h0M800.4 282.3h0M820.2 305.4h0M625.4 309.5h0M745.7 299.4h0M766.9 297.9h0M476.4 427.8h0M743.2 285.6h0M563.1 275.2h0M765.5 273.9h0M612.4 288.9h0M386.3 462.8h0M344.2 453.9h0M727.5 299.0h0M628.5 252.6h0M794.5 230.1h0M496.3 292.9h0M293.4 463.6h0M278.8 493.8h0M787.6 261.8h0M511.8 404.4h0M327.3 470.7h0M433.3 443.9h0M671.2 275.7h0M420.3 402.7h0M636.4 304.5h0M700.7 329.4h0M424.2 398.7h0M585.9 337.4h0M809.8 301.3h0M681.3 315.4h0M372.3 444.8h0M360.1 468.9h0M370.3 448.8h0M739.2 282.2h0M380.4 534.2h0M661.6 329.5h0M461.1 419.7h0M683.6 250.6h0M643.5 258.6h0M520.0 294.6h0M557.5 367.5h0M587.4 267.3h0M733.6 274.9h0M770.6 261.7h0M798.9 291.9h0M772.7 288.0h0M730.4 241.5h0M660.4 273.4h0M501.6 418.5h0M701.1 258.5h0M499.7 355.8h0M711.2 281.5h0M766.1 204.6h0M463.1 418.8h0M359.7 468.5h0M377.1 488.9h0M471.2 478.5h0M346.8 444.4h0M553.2 325.3h0M463.8 383.3h0M477.3 406.4h0M408.4 466.1h0M674.3 257.2h0M701.3 284.1h0M619.3 316.1h0M700.6 237.4h0M463.3 364.3h0M353.3 451.8h0M807.5 286.3h0M630.4 370.1h0M409.5 442.2h0M692.6 216.3h0M402.0 413.2h0M260.9 467.3h0M643.9 235.5h0M496.6 348.8h0M477.8 444.9h0M594.9 313.5h0M336.9 482.8h0M379.4 369.2h0M696.4 236.0h0M672.0 269.1h0M814.6 284.9h0M675.7 278.7h0M752.9 214.4h0M330.0 478.3h0M594.7 318.6h0M738.2 268.8h0M354.5 478.3h0M746.5 313.7h0M379.7 447.0h0M463.9 372.5h0M367.5 446.2h0M359.0 444.0h0M342.7 458.4h0M696.0 285.2h0M653.5 356.1h0M398.2 425.8h0M689.6 276.9h0M677.4 230.5h0M309.4 511.8h0M523.5 269.5h0M579.6 309.4h0M714.5 238.4h0M596.4 307.1h0M432.7 400.0h0M754.8 221.8h0M389.5 435.5h0M327.2 437.5h0M741.3 238.7h0M386.8 466.2h0M772.3 254.2h0M573.2 345.4h0M422.9 422.5h0M562.6 347.1h0M477.8 407.8h0M726.3 281.8h0M478.2 348.6h0M456.3 415.9h0M713.3 256.3h0M452.3 362.9h0M386.2 500.6h0M585.2 310.0h0M383.7 483.9h0M354.9 456.0h0M355.4 419.1h0M736.0 248.3h0M329.7 495.5h0M670.2 237.3h0M789.5 307.7h0M799.8 288.1h0M410.7 437.1h0M390.7 365.4h0M705.7 253.5h0M519.3 349.7h0M449.1 400.5h0M375.8 409.2h0M547.0 369.7h0M376.2 456.3h0M721.0 243.6h0M402.2 408.7h0M789.2 297.7h0M773.0 318.7h0M719.6 274.9h0M608.0 259.4h0M358.7 522.7h0M425.4 407.8h0M720.3 318.3h0M574.1 341.4h0M362.5 444.0h0M575.1 393.7h0M696.1 280.5h0M376.2 482.6h0M772.5 289.9h0M755.0 268.7h0M391.5 421.4h0M599.9 282.1h0M728.0 215.5h0M572.9 354.8h0M720.8 190.7h0M307.6 441.5h0M420.5 397.8h0M553.8 334.3h0M340.4 465.8h0M411.0 317.3h0M763.7 304.9h0M712.5 286.7h0M448.1 396.4h0M793.0 308.6h0M648.0 345.5h0M468.0 360.0h0M668.8 301.3h0M691.4 244.3h0M514.3 325.7h0M716.9 273.1h0M384.1 426.7h0M549.0 340.5h0M404.5 498.2h0M330.8 435.6h0M701.3 238.7h0M506.8 374.7h0M444.9 504.6h0M605.7 285.9h0M678.7 247.8h0M412.0 426.8h0M428.3 425.8h0M808.7 257.8h0M392.3 414.7h0M399.6 476.0h0M601.0 337.2h0M449.9 378.8h0M778.2 236.4h0" stroke="#e2b440" stroke-width="2.8" stroke-linecap="round" fill="none"/>
<path d="M713 229.5h6M722 229.5h5M730 230.5h3M736 229.5h2" stroke="#fff" stroke-width="1.8" fill="none"/>
<circle cx="476.3" cy="133.4" r="3.5" fill="#d8ffd0" fill-opacity="0.55"/><circle cx="476.3" cy="133.4" r="1.6" fill="#fff"/><circle cx="402.9" cy="166.8" r="3.0" fill="#6fe0ff" fill-opacity="0.55"/><circle cx="402.9" cy="166.8" r="1.4" fill="#fff"/><circle cx="379.9" cy="172.3" r="2.6" fill="#6fe0e0" fill-opacity="0.55"/><circle cx="379.9" cy="172.3" r="1.2" fill="#fff"/><circle cx="446.6" cy="167.9" r="2.6" fill="#6fe0ff" fill-opacity="0.55"/><circle cx="446.6" cy="167.9" r="1.2" fill="#fff"/><circle cx="356.5" cy="196.8" r="4.0" fill="#9fd0ff" fill-opacity="0.55"/><circle cx="356.5" cy="196.8" r="1.8" fill="#fff"/><circle cx="394.0" cy="236.0" r="3.0" fill="#7fc0ff" fill-opacity="0.55"/><circle cx="394.0" cy="236.0" r="1.3" fill="#fff"/><circle cx="310.2" cy="159.3" r="2.6" fill="#e0b0c0" fill-opacity="0.55"/><circle cx="310.2" cy="159.3" r="1.2" fill="#fff"/><circle cx="197.5" cy="298.4" r="2.8" fill="#e8e8b0" fill-opacity="0.55"/><circle cx="197.5" cy="298.4" r="1.3" fill="#fff"/><circle cx="245.7" cy="314.7" r="3.6" fill="#6fe0ff" fill-opacity="0.55"/><circle cx="245.7" cy="314.7" r="1.6" fill="#fff"/><circle cx="482.6" cy="151.2" r="2.0" fill="#ffffff" fill-opacity="0.55"/><circle cx="482.6" cy="151.2" r="1.2" fill="#fff"/><circle cx="502.2" cy="139.3" r="2.2" fill="#ffffd0" fill-opacity="0.55"/><circle cx="502.2" cy="139.3" r="1.2" fill="#fff"/><circle cx="700.2" cy="211.2" r="3.6" fill="#6fe0ff" fill-opacity="0.55"/><circle cx="700.2" cy="211.2" r="1.6" fill="#fff"/><circle cx="700.2" cy="229.8" r="3.6" fill="#d090a8" fill-opacity="0.55"/><circle cx="700.2" cy="229.8" r="1.6" fill="#fff"/><circle cx="783.3" cy="278.4" r="3.4" fill="#6fe0ff" fill-opacity="0.55"/><circle cx="783.3" cy="278.4" r="1.5" fill="#fff"/><circle cx="783.6" cy="246.5" r="3.0" fill="#d080a0" fill-opacity="0.55"/><circle cx="783.6" cy="246.5" r="1.2" fill="#fff"/><circle cx="790.3" cy="245.7" r="2.4" fill="#d090b0" fill-opacity="0.55"/><circle cx="790.3" cy="245.7" r="1.0" fill="#fff"/><circle cx="833.0" cy="328.0" r="3.8" fill="#c04060" fill-opacity="0.55"/><circle cx="833.0" cy="328.0" r="1.6" fill="#fff"/><circle cx="740.3" cy="334.4" r="3.8" fill="#c8ffc8" fill-opacity="0.55"/><circle cx="740.3" cy="334.4" r="1.7" fill="#fff"/><circle cx="579.7" cy="315.4" r="3.4" fill="#6fe0ff" fill-opacity="0.55"/><circle cx="579.7" cy="315.4" r="1.5" fill="#fff"/><circle cx="599.4" cy="216.8" r="2.4" fill="#e0a0b8" fill-opacity="0.55"/><circle cx="599.4" cy="216.8" r="1.0" fill="#fff"/><circle cx="559.3" cy="283.9" r="2.4" fill="#e0a0b8" fill-opacity="0.55"/><circle cx="559.3" cy="283.9" r="1.0" fill="#fff"/><circle cx="590.8" cy="161.2" r="2.2" fill="#80e0ff" fill-opacity="0.55"/><circle cx="590.8" cy="161.2" r="1.0" fill="#fff"/><circle cx="533.4" cy="199.8" r="2.2" fill="#e0a0b8" fill-opacity="0.55"/><circle cx="533.4" cy="199.8" r="1.0" fill="#fff"/><circle cx="196.3" cy="353.4" r="2.8" fill="#f0f0c0" fill-opacity="0.55"/><circle cx="196.3" cy="353.4" r="1.3" fill="#fff"/><circle cx="239.0" cy="420.0" r="2.6" fill="#e0a0b8" fill-opacity="0.55"/><circle cx="239.0" cy="420.0" r="1.1" fill="#fff"/><circle cx="226.0" cy="481.3" r="3.2" fill="#d890b0" fill-opacity="0.55"/><circle cx="226.0" cy="481.3" r="1.3" fill="#fff"/><circle cx="413.3" cy="504.3" r="2.8" fill="#c8f0c0" fill-opacity="0.55"/><circle cx="413.3" cy="504.3" r="1.3" fill="#fff"/><circle cx="809.5" cy="462.6" r="3.2" fill="#6fd8ff" fill-opacity="0.55"/><circle cx="809.5" cy="462.6" r="1.5" fill="#fff"/><circle cx="762.6" cy="494.4" r="3.4" fill="#c0f0c0" fill-opacity="0.55"/><circle cx="762.6" cy="494.4" r="1.6" fill="#fff"/><circle cx="770.4" cy="483.3" r="2.6" fill="#6fd8ff" fill-opacity="0.55"/><circle cx="770.4" cy="483.3" r="1.2" fill="#fff"/><circle cx="746.0" cy="504.8" r="3.0" fill="#6fd8ff" fill-opacity="0.55"/><circle cx="746.0" cy="504.8" r="1.4" fill="#fff"/><circle cx="714.3" cy="475.0" r="2.6" fill="#c8f0c0" fill-opacity="0.55"/><circle cx="714.3" cy="475.0" r="1.2" fill="#fff"/><circle cx="637.2" cy="401.6" r="2.6" fill="#e0a0b8" fill-opacity="0.55"/><circle cx="637.2" cy="401.6" r="1.1" fill="#fff"/><circle cx="852.2" cy="383.8" r="3.0" fill="#9080ff" fill-opacity="0.55"/><circle cx="852.2" cy="383.8" r="1.3" fill="#fff"/><circle cx="856.7" cy="377.5" r="2.6" fill="#80a0ff" fill-opacity="0.55"/><circle cx="856.7" cy="377.5" r="1.1" fill="#fff"/><circle cx="844.8" cy="426.8" r="2.6" fill="#6fd8ff" fill-opacity="0.55"/><circle cx="844.8" cy="426.8" r="1.2" fill="#fff"/><circle cx="176.9" cy="417.5" r="1.6" fill="#ffffff" fill-opacity="0.55"/><circle cx="176.9" cy="417.5" r="1.0" fill="#fff"/><circle cx="175.9" cy="428.9" r="2.2" fill="#e8d0e0" fill-opacity="0.55"/><circle cx="175.9" cy="428.9" r="1.2" fill="#fff"/><circle cx="844.0" cy="427.0" r="2.0" fill="#6fd8ff" fill-opacity="0.55"/><circle cx="844.0" cy="427.0" r="1.0" fill="#fff"/><circle cx="308.7" cy="249.9" r="2.4" fill="#6fe0ff" fill-opacity="0.55"/><circle cx="308.7" cy="249.9" r="1.1" fill="#fff"/><circle cx="242.5" cy="218.0" r="2.0" fill="#6fe0ff" fill-opacity="0.55"/><circle cx="242.5" cy="218.0" r="1.0" fill="#fff"/><circle cx="369.4" cy="137.7" r="2.0" fill="#6fe0ff" fill-opacity="0.55"/><circle cx="369.4" cy="137.7" r="1.0" fill="#fff"/><circle cx="460.0" cy="310.0" r="2.8" fill="#6fe0ff" fill-opacity="0.55"/><circle cx="460.0" cy="310.0" r="1.2" fill="#fff"/><circle cx="500.0" cy="290.0" r="2.2" fill="#6fe0ff" fill-opacity="0.55"/><circle cx="500.0" cy="290.0" r="1.0" fill="#fff"/><circle cx="654.0" cy="143.0" r="1.8" fill="#ffffff" fill-opacity="0.55"/><circle cx="654.0" cy="143.0" r="1.0" fill="#fff"/><circle cx="612.0" cy="254.0" r="2.4" fill="#6fe0ff" fill-opacity="0.55"/><circle cx="612.0" cy="254.0" r="1.1" fill="#fff"/><circle cx="715.2" cy="259.0" r="5.0" fill="#b0f0b0" fill-opacity="0.35"/><circle cx="715.2" cy="259.0" r="3.5" fill="#b0f0b0" fill-opacity="0.7"/><circle cx="715.2" cy="259.0" r="2.2" fill="#ffffff"/><circle cx="317.1" cy="333.8" r="4.2" fill="#d8a0b0" fill-opacity="0.35"/><circle cx="317.1" cy="333.8" r="2.9" fill="#d8a0b0" fill-opacity="0.7"/><circle cx="317.1" cy="333.8" r="1.9" fill="#ffffff"/><circle cx="446.5" cy="393.4" r="5.0" fill="#50a8ff" fill-opacity="0.35"/><circle cx="446.5" cy="393.4" r="3.5" fill="#50a8ff" fill-opacity="0.7"/><circle cx="446.5" cy="393.4" r="2.2" fill="#ffffff"/><circle cx="792.0" cy="450.9" r="4.6" fill="#50d0ff" fill-opacity="0.35"/><circle cx="792.0" cy="450.9" r="3.2" fill="#50d0ff" fill-opacity="0.7"/><circle cx="792.0" cy="450.9" r="2.0" fill="#ffffff"/><circle cx="311.6" cy="514.0" r="3.4" fill="#d8a8c0" fill-opacity="0.35"/><circle cx="311.6" cy="514.0" r="2.4" fill="#d8a8c0" fill-opacity="0.7"/><circle cx="311.6" cy="514.0" r="1.5" fill="#ffffff"/><circle cx="381.6" cy="450.7" r="4.4" fill="#f08a1e"/><circle cx="382.2" cy="450.2" r="2.6" fill="#ffc23c"/><circle cx="380" cy="452.4" r="1.2" fill="#e04a10"/><circle cx="506.5" cy="365.5" r="3.5" fill="#90a8ea"/>
<g clip-path="url(#sky)"><path d="M159.7 436.3 L163.9 440.5 L168.2 444.5 L172.5 448.5 L177.0 452.3 L181.5 456.1 L186.1 459.8 L190.8 463.4 L195.6 466.9 L200.5 470.4 L205.4 473.7 L210.4 477.0 L215.5 480.2 L220.7 483.3 L225.9 486.4 L231.2 489.3 L236.5 492.2 L242.0 495.0 L247.4 497.8 L253.0 500.4 L258.6 503.0 L264.2 505.6 L269.9 508.0 L275.7 510.4 L281.5 512.7 L287.4 515.0 L293.3 517.1 L299.3 519.2 L305.3 521.3 L311.3 523.3 L317.4 525.2 L323.6 527.0 L329.7 528.8 L336.0 530.5 L342.2 532.2 L348.5 533.7 L354.8 535.3 L361.2 536.7 L367.6 538.1 L374.0 539.4 L380.4 540.7 L386.9 541.9 L393.4 543.1 L399.9 544.1 L406.5 545.2 L413.0 546.1 L419.6 547.0 L426.2 547.8 L432.8 548.6 L439.5 549.3 L446.1 549.9 L452.8 550.5 L459.5 551.0 L466.2 551.5 L472.9 551.9 L479.6 552.2 L486.3 552.5 L493.0 552.7 L499.7 552.9 L506.5 553.0 L513.2 553.0 L519.9 553.0 L526.7 552.9 L533.4 552.7 L540.1 552.5 L546.8 552.2 L553.5 551.9 L560.2 551.5 L566.9 551.0 L573.6 550.5 L580.3 549.9 L586.9 549.3 L593.6 548.6 L600.2 547.8 L606.8 547.0 L613.4 546.1 L619.9 545.2 L626.5 544.1 L633.0 543.1 L639.5 541.9 L646.0 540.7 L652.4 539.4 L658.8 538.1 L665.2 536.7 L671.6 535.3 L677.9 533.7 L684.2 532.2 L690.4 530.5 L696.7 528.8 L702.8 527.0 L709.0 525.2 L715.1 523.3 L721.1 521.3 L727.1 519.2 L733.1 517.1 L739.0 515.0 L744.9 512.7 L750.7 510.4 L756.5 508.0 L762.2 505.6 L767.8 503.0 L773.4 500.4 L779.0 497.8 L784.4 495.0 L789.9 492.2 L795.2 489.3 L800.5 486.4 L805.7 483.3 L810.9 480.2 L816.0 477.0 L821.0 473.7 L825.9 470.4 L830.8 466.9 L835.6 463.4 L840.3 459.8 L844.9 456.1 L849.4 452.3 L853.9 448.5 L858.2 444.5 L862.5 440.5 L866.7 436.3 A353.5 353.5 0 0 1 159.7 436.3 Z" fill="#0a2014" stroke="#03140a" stroke-width="1"/></g>
<g font-family="Liberation Sans, sans-serif" font-size="16.2"><text x="201.2" y="485.0" textLength="7.0" lengthAdjust="spacingAndGlyphs" fill="#b4a050" stroke="#b4a050" stroke-width="0.3">E</text><text x="371.1" y="552.5" textLength="17.0" lengthAdjust="spacingAndGlyphs" fill="#b4a050" stroke="#b4a050" stroke-width="0.3">SE</text><text x="574.8" y="563.0" textLength="8.0" lengthAdjust="spacingAndGlyphs" fill="#b4a050" stroke="#b4a050" stroke-width="0.3">S</text><text x="759.0" y="516.6" textLength="19.7" lengthAdjust="spacingAndGlyphs" fill="#b4a050" stroke="#b4a050" stroke-width="0.3">SO</text></g><g fill="none" stroke="#c81e3c" stroke-width="1"><circle cx="512.5" cy="436.3" r="8.8"/><circle cx="512.5" cy="436.3" r="4.5"/></g><circle cx="512.5" cy="436.3" r="1.6" fill="#c81e3c"/>
</svg><div class="info" id="i1" style="letter-spacing:-0.24px;left:6.2px;top:4.2px;font-size:13.5px">Heure locale 11:06:40</div><div class="info" id="i2" style="letter-spacing:-0.23px;left:145.2px;top:4.2px;font-size:13.5px">samedi 18 octobre 2025</div><div class="info" id="i3" style="letter-spacing:-0.25px;left:762.1px;top:4.1px;font-size:13.5px">rien</div><div class="info" id="i4" style="letter-spacing:-0.28px;left:6.1px;top:672.8px;font-size:13.5px">Brest, Finistère, France</div></div>
<div class="abs" id="status"><div class="info" id="s1" style="letter-spacing:-0.29px;left:637.9px;top:4.4px;font-size:13.5px">+38° 18' 12", +50° 06' 10"</div><div class="info" id="s2" style="letter-spacing:-0.33px;left:790.9px;top:4.4px;font-size:13.5px">15h 23m 12s, +65° 12' 45" (J2025.8)</div><svg class="abs" style="left:1009px;top:7px" width="15" height="15"><rect x="12" y="3" width="2" height="2" fill="#707070"/><rect x="9" y="6" width="2" height="2" fill="#707070"/><rect x="12" y="6" width="2" height="2" fill="#707070"/><rect x="6" y="9" width="2" height="2" fill="#707070"/><rect x="9" y="9" width="2" height="2" fill="#707070"/><rect x="12" y="9" width="2" height="2" fill="#707070"/><rect x="3" y="12" width="2" height="2" fill="#707070"/><rect x="6" y="12" width="2" height="2" fill="#707070"/><rect x="9" y="12" width="2" height="2" fill="#707070"/><rect x="12" y="12" width="2" height="2" fill="#707070"/></svg></div>
<div class="abs" id="deskL"></div><div class="abs" id="deskB"></div>
</body></html>
